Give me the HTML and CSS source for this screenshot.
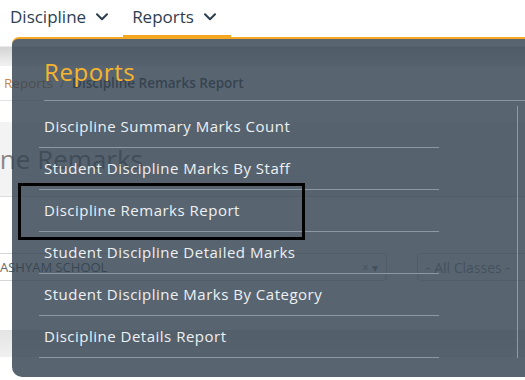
FILE: index.html
```html
<!DOCTYPE html>
<html>
<head>
<meta charset="utf-8">
<link rel="stylesheet" href="styles.css">
</head>
<body>
<div class="page">
  <nav class="topnav">
    <div class="navitem">Discipline <svg class="chev" viewBox="0 0 12 8" width="12" height="8"><polyline points="1,1.2 6,6.2 11,1.2"/></svg></div>
    <div class="navitem active">Reports <svg class="chev" viewBox="0 0 12 8" width="12" height="8"><polyline points="1,1.2 6,6.2 11,1.2"/></svg></div>
  </nav>
  <div class="band"></div>
  <div class="crumbs"><span class="crumb-link">Reports</span><span class="crumb-sep">/</span><span class="crumb-cur">Discipline Remarks Report</span></div>
  <div class="gap-white"></div>
  <div class="titlebar"><h1 class="page-title">Discipline Remarks</h1></div>
  <div class="filters">
    <div class="select school"><span class="sel-text">ASHYAM SCHOOL</span><span class="sel-icons">× ▾</span></div>
    <div class="select classes"><span class="sel-text">- All Classes -</span></div>
  </div>
  <div class="footband"></div>
</div>

<div class="menu">
  <div class="menu-head"><div class="menu-title">Reports</div></div>
  <div class="menu-body">
    <ul class="menu-list">
      <li class="menu-item">Discipline Summary Marks Count</li>
      <li class="menu-item">Student Discipline Marks By Staff</li>
      <li class="menu-item">Discipline Remarks Report</li>
      <li class="menu-item">Student Discipline Detailed Marks</li>
      <li class="menu-item">Student Discipline Marks By Category</li>
      <li class="menu-item">Discipline Details Report</li>
    </ul>
    <div class="menu-track"></div>
  </div>
</div>
<div class="highlight"></div>
</body>
</html>
```

FILE: styles.css
```css
* { box-sizing: border-box; }
html, body { margin: 0; padding: 0; }
body {
  width: 525px;
  height: 380px;
  overflow: hidden;
  position: relative;
  background: #ffffff;
  font-family: "Open Sans", "Noto Sans", sans-serif;
}
.page { width: 525px; }

.topnav {
  height: 37px;
  display: flex;
  align-items: stretch;
  padding-left: 1px;
  background: #fff;
}
.navitem {
  display: flex;
  align-items: center;
  gap: 10px;
  padding: 0 15px 2px 9px;
  font-size: 17px;
  color: #2c3e50;
  border-bottom: 2px solid transparent;
}
.navitem.active { border-bottom-color: #f5a623; }
.chev { fill: none; stroke: #2c3e50; stroke-width: 2; stroke-linecap: round; stroke-linejoin: round; }

.band {
  height: 29px;
  background: linear-gradient(#ffffff 0, #ffffff 9px, #d4d4d4 10px, #f2f2f2 29px);
}
.crumbs {
  height: 35px;
  display: flex;
  align-items: center;
  padding-left: 4px;
  font-size: 13.5px;
  border-bottom: 1px solid #e2e2e2;
  gap: 7px;
}
.crumb-link { color: #c8884a; }
.crumb-sep { color: #aaa; }
.crumb-cur { color: #555; font-weight: 600; }
.gap-white { height: 21px; }
.titlebar {
  height: 75px;
  background: #f3f3f3;
  border-bottom: 1px solid #ddd;
  display: flex;
  align-items: center;
  overflow: hidden;
}
.page-title {
  margin: 0 0 0 -86px;
  font-size: 26px;
  font-weight: 400;
  color: #888;
  white-space: nowrap;
}
.filters {
  display: flex;
  gap: 30px;
  padding-top: 56px;
  height: 133px;
  overflow: hidden;
}
.select {
  flex-shrink: 0;
  height: 28px;
  border: 1px solid #d6d6d6;
  border-radius: 4px;
  display: flex;
  align-items: center;
  font-size: 13px;
  color: #666;
  white-space: nowrap;
}
.school { width: 397px; margin-left: -10px; padding-left: 9px; justify-content: space-between; padding-right: 8px; }
.classes { width: 160px; padding-left: 8px; color: #999; font-size: 14px; }
.sel-icons { color: #999; font-size: 12px; }
.footband {
  height: 28px;
  background: linear-gradient(#e4e4e4, #f0f0f0);
  border-bottom: 1px solid #fff;
}

.menu {
  position: absolute;
  left: 12px;
  top: 37px;
  width: 540px;
  background: rgba(46, 62, 78, 0.8);
  border-top: 2px solid #f7a823;
  border-radius: 7px 0 0 10px;
  padding-bottom: 19px;
}
.menu-head {
  margin-left: 32px;
  height: 62px;
  border-bottom: 1px solid #8a97a3;
  padding-top: 19px;
}
.menu-title {
  font-size: 24px;
  line-height: 28px;
  letter-spacing: 0.6px;
  color: #f7b52d;
  font-weight: 500;
}
.menu-body {
  display: flex;
  padding-top: 5px;
}
.menu-list {
  list-style: none;
  margin: 0 0 0 27px;
  padding: 0;
  width: 400px;
}
.menu-item {
  height: 42px;
  border-bottom: 1px solid #8c99a5;
  padding: 0 0 2px 5px;
  display: flex;
  align-items: center;
  font-size: 15px;
  letter-spacing: 0.5px;
  font-weight: 500;
  color: #eef0f2;
  white-space: nowrap;
}
.menu-track {
  margin-left: 78px;
  border-left: 1px solid #8e9ba6;
}
.highlight {
  position: absolute;
  left: 18px;
  top: 183px;
  width: 287px;
  height: 57px;
  border: 3px solid #000;
}
```
